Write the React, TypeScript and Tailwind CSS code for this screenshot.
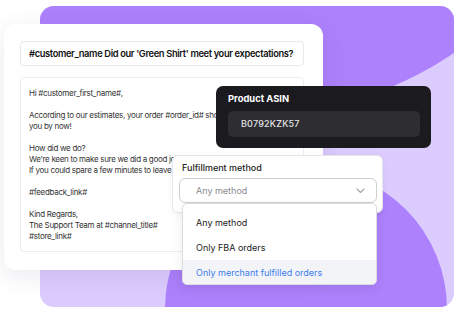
const bodyParagraphs = [
  ["Hi #customer_first_name#,"],
  [
    "According to our estimates, your order #order_id# should have reached",
    "you by now!",
  ],
  [
    "How did we do?",
    "We're keen to make sure we did a good job for you.",
    "If you could spare a few minutes to leave a review, it would help.",
  ],
  ["#feedback_link#"],
  ["Kind Regards,", "The Support Team at #channel_title#", "#store_link#"],
];

const options = ["Any method", "Only FBA orders", "Only merchant fulfilled orders"];

const Chevron = () => (
  <svg width="9" height="6" viewBox="0 0 9 6" fill="none">
    <path d="M1 1l3.5 3.5L8 1" stroke="#9ca3af" strokeWidth="1.1" strokeLinecap="round" strokeLinejoin="round" />
  </svg>
);

export default function App() {
  return (
    <div className="relative w-[460px] h-[322px] bg-white overflow-hidden font-['Inter',sans-serif] pt-[24px] pl-[4px]">
      {/* purple backdrop */}
      <div className="absolute left-[40px] top-[6px] w-[414px] h-[301px] rounded-[14px] overflow-hidden bg-[#dccbfd]">
        <div className="absolute left-[-123px] top-[-579px] w-[686px] h-[686px] rounded-full bg-[#ad81fc]" />
        <div className="absolute left-[125px] top-[162px] w-[282px] h-[282px] rounded-full bg-[#ad81fc]" />
      </div>

      {/* email card */}
      <div className="relative w-[319px] h-[246px] rounded-[12px] bg-white shadow-[0_6px_24px_rgba(60,40,100,0.10)] pt-[17px] pl-[16px] pr-[19px] flex flex-col gap-[11px]">
        <div className="h-[25px] rounded-[4px] border border-[#e9e9ee] flex items-center pl-[8px] text-[9.3px] tracking-[-0.35px] font-semibold text-[#111] whitespace-nowrap">
          #customer_name Did our 'Green Shirt' meet your expectations?
        </div>
        <div className="h-[175px] rounded-[4px] border border-[#ececf0] pt-[10px] pl-[8px] text-[8px] tracking-[-0.3px] leading-[11px] text-[#333] flex flex-col gap-[11px] overflow-hidden">
          {bodyParagraphs.map((p, i) => (
            <div key={i}>
              {p.map((line) => (
                <div key={line} className="whitespace-nowrap">
                  {line}
                </div>
              ))}
            </div>
          ))}
        </div>
      </div>

      {/* product ASIN */}
      <div className="absolute left-[216px] top-[86px] w-[215px] h-[62px] rounded-[7px] bg-[#1b1a1f] pt-[7px] pl-[12px] pr-[11px] flex flex-col gap-[6px]">
        <div className="text-[9.4px] leading-[12px] font-bold text-white">Product ASIN</div>
        <div className="h-[26px] rounded-[5px] bg-[#2e2d32] flex items-center pl-[13px] text-[9px] font-medium text-[#e4e4e7] tracking-[0.2px]">
          B0792KZK57
        </div>
      </div>

      {/* fulfillment select */}
      <div className="absolute left-[172px] top-[155px] w-[211px] h-[58px] rounded-[6px] bg-white border border-[#e6e6ea] pt-[6px] pl-[9px] shadow-[0_2px_8px_rgba(0,0,0,0.05)]">
        <div className="text-[9px] leading-[12px] font-medium text-[#222]">Fulfillment method</div>
        <div className="mt-[4px] ml-[-3px] w-[198px] h-[25px] rounded-[6px] border border-[#cfcfd4] flex items-center justify-between pl-[16px] pr-[11px] text-[9px] text-[#8a8a8f]">
          <span>Any method</span>
          <Chevron />
        </div>
      </div>

      {/* dropdown menu */}
      <div className="absolute left-[182px] top-[203px] w-[195px] h-[82px] rounded-[5px] bg-white border border-[#dcdce0] shadow-[0_4px_12px_rgba(0,0,0,0.08)] pt-[6px] overflow-hidden">
        {options.map((o, i) => (
          <div
            key={o}
            className={`h-[25px] flex items-center pl-[13px] text-[9px] ${
              i === 2 ? "bg-[#f3f4f8] text-[#3b7ded]" : "text-[#222]"
            }`}
          >
            {o}
          </div>
        ))}
      </div>
    </div>
  );
}
